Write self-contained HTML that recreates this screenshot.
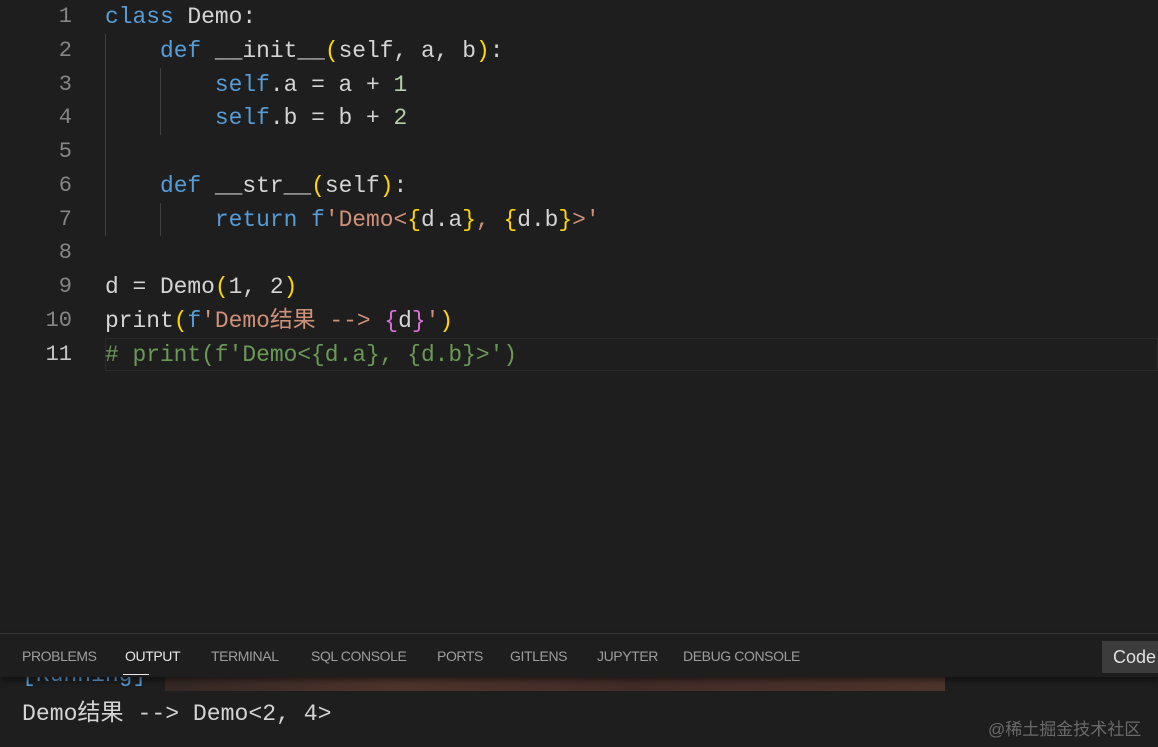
<!DOCTYPE html>
<html><head><meta charset="utf-8"><style>
body{margin:0;width:1158px;height:747px;background:#1e1e1e;overflow:hidden;position:relative;font-family:"Liberation Mono","Noto Sans CJK SC",monospace;}
.ln{position:absolute;left:0;width:72px;text-align:right;color:#858585;font-size:22px;}
.code{position:absolute;left:105px;white-space:pre;font-size:22.9px;color:#d4d4d4;}
.row{position:absolute;height:34px;line-height:34px;}
.k{color:#569cd6}.n{color:#b5cea8}.s{color:#ce9178}.y{color:#ffd700}.p{color:#da70d6}.c{color:#6a9955}.f{color:#dcdcaa}
.g{position:absolute;width:1px;background:#404040;}
.tabs{position:absolute;top:635px;left:0;width:1158px;height:42px;background:#1e1e1e;box-shadow:0 3px 6px rgba(0,0,0,.5);font-family:"Liberation Sans",sans-serif;font-size:14px;color:#9d9d9d;}
.tabs span{position:absolute;top:13px;letter-spacing:-0.4px}
</style></head><body>
<div class="row" style="top:338px;left:105px;width:1053px;border:1px solid #2a2a2a;box-sizing:border-box;height:33px"></div>
<div class="g" style="left:105px;top:34px;height:202px"></div>
<div class="g" style="left:160px;top:68px;height:67px"></div>
<div class="g" style="left:160px;top:203px;height:33px"></div>
<div class="row ln" style="top:0">1</div>
<div class="row ln" style="top:34px">2</div>
<div class="row ln" style="top:68px">3</div>
<div class="row ln" style="top:101px">4</div>
<div class="row ln" style="top:135px">5</div>
<div class="row ln" style="top:169px">6</div>
<div class="row ln" style="top:203px">7</div>
<div class="row ln" style="top:236px">8</div>
<div class="row ln" style="top:270px">9</div>
<div class="row ln" style="top:304px">10</div>
<div class="row ln" style="top:338px;color:#c6c6c6">11</div>
<div class="row code" style="top:0"><span class="k">class</span> Demo:</div>
<div class="row code" style="top:34px">    <span class="k">def</span> __init__<span class="y">(</span>self, a, b<span class="y">)</span>:</div>
<div class="row code" style="top:68px">        <span class="k">self</span>.a = a + <span class="n">1</span></div>
<div class="row code" style="top:101px">        <span class="k">self</span>.b = b + <span class="n">2</span></div>
<div class="row code" style="top:169px">    <span class="k">def</span> __str__<span class="y">(</span>self<span class="y">)</span>:</div>
<div class="row code" style="top:203px">        <span class="k">return</span> <span class="k">f</span><span class="s">'Demo&lt;</span><span class="y">{</span>d.a<span class="y">}</span><span class="s">, </span><span class="y">{</span>d.b<span class="y">}</span><span class="s">&gt;'</span></div>
<div class="row code" style="top:270px">d = Demo<span class="y">(</span>1, 2<span class="y">)</span></div>
<div class="row code" style="top:304px">print<span class="y">(</span><span class="k">f</span><span class="s">'Demo结果 --&gt; </span><span class="p">{</span>d<span class="p">}</span><span class="s">'</span><span class="y">)</span></div>
<div class="row code" style="top:338px"><span class="c"># print(f'Demo&lt;{d.a}, {d.b}&gt;')</span></div>
<div style="position:absolute;top:633px;left:0;width:1158px;height:1px;background:#3a3a3a"></div>
<div style="position:absolute;top:662px;left:22px;font-size:23px;color:#569cd6;white-space:pre">[Running]</div>
<div style="position:absolute;top:673px;left:165px;width:780px;height:18px;background:linear-gradient(90deg,#3a2a26,#5a3a30 30%,#4a302a 60%,#5a3a30);opacity:.8"></div>
<div class="tabs">
<span style="left:22px">PROBLEMS</span>
<span style="left:125px;color:#e7e7e7">OUTPUT</span>
<div style="position:absolute;left:123px;top:39px;width:26px;height:1px;background:#e7e7e7"></div>
<span style="left:211px">TERMINAL</span>
<span style="left:311px">SQL CONSOLE</span>
<span style="left:437px">PORTS</span>
<span style="left:510px">GITLENS</span>
<span style="left:597px">JUPYTER</span>
<span style="left:683px">DEBUG CONSOLE</span>
</div>
<div style="position:absolute;left:1102px;top:641px;width:56px;height:32px;background:#3c3c3c;color:#e0e0e0;font-family:'Liberation Sans',sans-serif;font-size:18px;line-height:32px;padding-left:11px;box-sizing:border-box">Code</div>
<div style="position:absolute;top:698px;left:22px;font-size:23.1px;color:#d4d4d4;white-space:pre;line-height:32px">Demo结果 --&gt; Demo&lt;2, 4&gt;</div>
<div style="position:absolute;top:715px;left:988px;font-family:'Liberation Sans','Noto Sans CJK SC',sans-serif;font-size:17px;color:#6a6a6a">@稀土掘金技术社区</div>
</body></html>
